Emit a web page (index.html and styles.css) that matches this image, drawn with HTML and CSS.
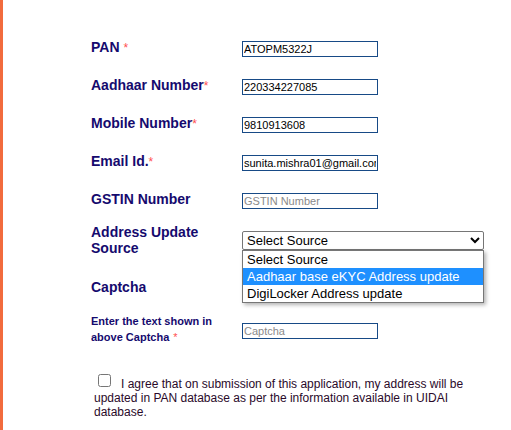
FILE: index.html
```html
<!DOCTYPE html>
<html lang="en">
<head>
<meta charset="utf-8">
<title>Address Update</title>
<link rel="stylesheet" href="styles.css">
</head>
<body>
<div class="page">
  <form class="form">
    <div class="row">
      <div class="label">PAN <span class="req">*</span></div>
      <div class="field"><input class="text" type="text" value="ATOPM5322J"></div>
    </div>
    <div class="row">
      <div class="label">Aadhaar Number<span class="req">*</span></div>
      <div class="field"><input class="text" type="text" value="220334227085"></div>
    </div>
    <div class="row">
      <div class="label">Mobile Number<span class="req">*</span></div>
      <div class="field"><input class="text" type="text" value="9810913608"></div>
    </div>
    <div class="row">
      <div class="label">Email Id.<span class="req">*</span></div>
      <div class="field"><input class="text" type="text" value="sunita.mishra01@gmail.com"></div>
    </div>
    <div class="row row-gstin">
      <div class="label">GSTIN Number</div>
      <div class="field"><input class="text" type="text" placeholder="GSTIN Number"></div>
    </div>
    <div class="row row-source">
      <div class="label label-wrap">Address Update Source</div>
      <div class="field field-select">
        <select class="select">
          <option>Select Source</option>
          <option>Aadhaar base eKYC Address update</option>
          <option>DigiLocker Address update</option>
        </select>
        <div class="dropdown">
          <div class="opt">Select Source</div>
          <div class="opt opt-active">Aadhaar base eKYC Address update</div>
          <div class="opt">DigiLocker Address update</div>
        </div>
      </div>
    </div>
    <div class="row row-captcha">
      <div class="label">Captcha</div>
      <div class="field"></div>
    </div>
    <div class="row row-enter">
      <div class="label label-small">Enter the text shown in above Captcha<span class="req req-small">*</span></div>
      <div class="field"><input class="text" type="text" placeholder="Captcha"></div>
    </div>
    <p class="agree"><input class="check" type="checkbox">I agree that on submission of this application, my address will be updated in PAN database as per the information available in UIDAI database.</p>
  </form>
</div>
</body>
</html>
```

FILE: styles.css
```css
html, body {
  margin: 0;
  padding: 0;
  background: #ffffff;
}

.page {
  border-left: 3px solid #f26b3d;
  min-height: 430px;
  box-sizing: border-box;
  font-family: "Liberation Sans", Arial, sans-serif;
}

.form {
  padding: 29px 0 0 88px;
  margin: 0;
}

.row {
  display: flex;
  align-items: center;
  height: 38px;
}

.row-gstin { height: 37px; }
.row-source { height: 44px; }
.row-captcha { height: 52px; }
.row-enter { height: 32px; }

.label {
  width: 151px;
  flex: none;
  font-size: 14px;
  line-height: 16px;
  font-weight: bold;
  color: #150a6e;
  margin-top: -2px;
}

.label-wrap {
  width: 145px;
  margin-right: 6px;
  margin-top: 0;
}

.label-small {
  font-size: 11px;
  line-height: 16px;
  width: 130px;
  margin-right: 21px;
  margin-top: -3px;
}

.req {
  color: #ff5050;
  font-weight: normal;
  font-size: 12px;
}

.req-small {
  font-size: 11px;
  margin-left: 4px;
}

.field {
  flex: none;
}

.text {
  box-sizing: border-box;
  width: 136px;
  height: 16px;
  margin: 0;
  padding: 0 1px;
  border: 1px solid #174a86;
  border-radius: 0;
  font-family: "Liberation Sans", Arial, sans-serif;
  font-size: 11px;
  color: #000000;
  background: #ffffff;
  outline: none;
}

.text::placeholder {
  color: #8a8a8a;
}

.field-select {
  position: relative;
}

.select {
  box-sizing: border-box;
  width: 242px;
  height: 19px;
  margin: 0;
  padding: 0;
  border: 1px solid #767676;
  border-radius: 2px;
  font-family: "Liberation Sans", Arial, sans-serif;
  font-size: 13px;
  color: #000000;
  background: #ffffff;
}

.dropdown {
  position: absolute;
  left: 0;
  top: 19px;
  width: 242px;
  box-sizing: border-box;
  border: 1px solid #767676;
  background: #ffffff;
  box-shadow: 2px 2px 4px rgba(0, 0, 0, 0.3);
  z-index: 2;
}

.opt {
  height: 17px;
  line-height: 17px;
  padding-left: 4px;
  font-size: 13px;
  color: #000000;
  white-space: nowrap;
}

.opt-active {
  background: #1e90ff;
  color: #ffffff;
}

.agree {
  margin: 31px 0 0 3px;
  width: 380px;
  font-size: 12px;
  line-height: 14px;
  color: #2a0a2a;
}

.check {
  width: 13px;
  height: 13px;
  margin: -3px 10px 0 4px;
  vertical-align: top;
}
```
